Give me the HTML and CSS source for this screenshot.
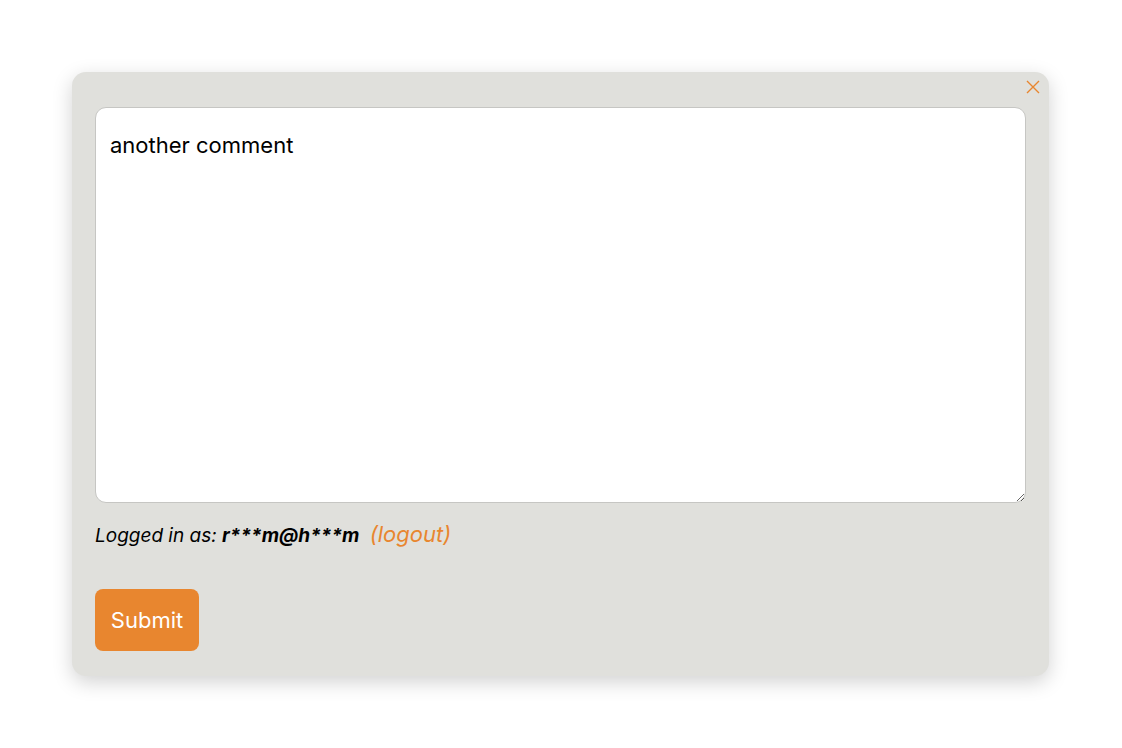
FILE: index.html
```html
<!DOCTYPE html>
<html>
<head>
<meta charset="utf-8">
<link rel="stylesheet" href="styles.css">
</head>
<body>
<div class="page">
  <div class="card">
    <button class="close" aria-label="Close">
      <svg width="14" height="14" viewBox="0 0 14 14"><path d="M1 1 L13 13 M13 1 L1 13" stroke="#e8862f" stroke-width="1.4" fill="none"/></svg>
    </button>
    <textarea class="editor">another comment</textarea>
    <p class="login">Logged in as: <b>r***m@h***m</b> <a class="logout">(logout)</a></p>
    <button class="submit">Submit</button>
  </div>
</div>
</body>
</html>
```
FILE: styles.css
```css
html, body { margin: 0; padding: 0; background: #fff; }
body { font-family: Inter, "Noto Sans", sans-serif; }
.page { padding: 72px 73px 72px 72px; min-height: 748px; box-sizing: border-box; }
.card {
  position: relative;
  width: 977px;
  height: 604px;
  box-sizing: border-box;
  background: #e0e0dc;
  border-radius: 14px;
  box-shadow: 0 6px 20px rgba(0,0,0,0.18);
  padding: 35px 23px 25px 23px;
  display: flex;
  flex-direction: column;
  align-items: flex-start;
}
.close {
  position: absolute;
  top: 8px;
  right: 9px;
  border: 0;
  background: none;
  padding: 0;
  width: 14px;
  height: 14px;
  cursor: pointer;
}
.editor {
  display: block;
  margin: 0;
  width: 931px;
  height: 398px;
  box-sizing: border-box;
  background: #fff;
  border: 1.5px solid #c6c6c3;
  border-radius: 11px;
  padding: 23px 14px;
  font-family: Inter, "Noto Sans", sans-serif;
  font-size: 22px;
  line-height: 28px;
  color: #000;
  outline: none;
}
.login {
  margin: 18px 0 0 0;
  font-size: 19px;
  font-style: italic;
  color: #000;
  line-height: 26px;
}
.login b { font-weight: 700; margin-right: 5px; }
.logout { color: #e8862f; font-size: 22px; }
.submit {
  margin-top: 40px;
  width: 104px;
  height: 62px;
  border: 0;
  border-radius: 8px;
  background: #e8862f;
  color: #fff;
  font-family: Inter, "Noto Sans", sans-serif;
  font-size: 22px;
}
```
